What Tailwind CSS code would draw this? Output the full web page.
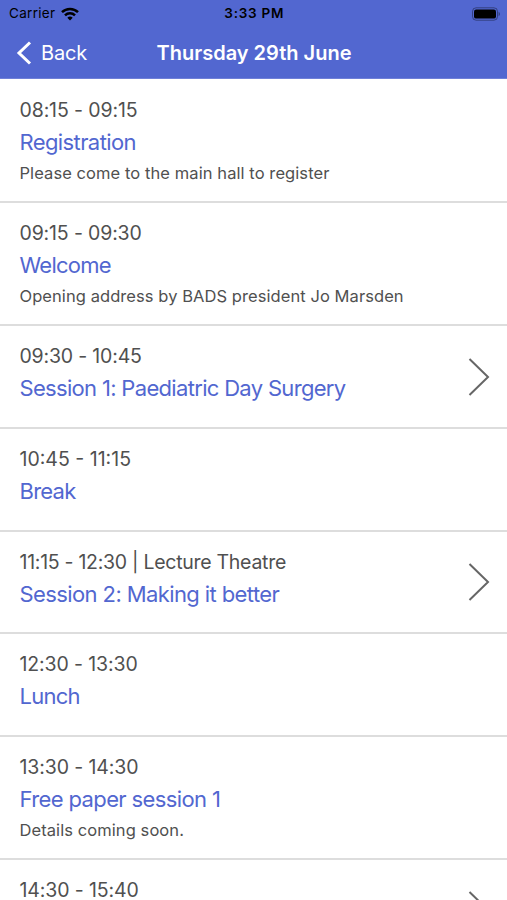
<!DOCTYPE html>
<html lang="en">
  <head>
    <meta charset="UTF-8" />
    <meta name="viewport" content="width=device-width, initial-scale=1.0" />
    <title>Thursday 29th June</title>
    <script src="https://cdn.jsdelivr.net/npm/@tailwindcss/browser@4"></script>
  </head>
  <body class="h-screen overflow-hidden bg-white font-['Inter',sans-serif] text-[#505050]">
    <!-- Header -->
    <header class="h-[79px] bg-[#5267d0] border-b border-[#6f80d8]">
      <div class="grid grid-cols-3 items-center h-[27px] pl-[9px] pr-[7.5px] text-black">
        <div class="flex items-center gap-[6px]">
          <span class="text-[13.5px] tracking-[0.3px]">Carrier</span>
          <svg class="w-[18px] h-[14px]" viewBox="0 0 18 14" fill="none" stroke="black" stroke-width="2.5">
            <path d="M1 5.2a11.4 11.4 0 0 1 16 0" />
            <path d="M4 8.4a7.1 7.1 0 0 1 10 0" />
            <path d="M9 13.6l-2.7-2.8a3.9 3.9 0 0 1 5.4 0z" fill="black" stroke="none" />
          </svg>
        </div>
        <span class="text-center text-[13.5px] tracking-[0.75px] font-semibold">3:33 PM</span>
        <svg class="justify-self-end w-[30px] h-[14px]" viewBox="0 0 30 14">
          <rect x="2.5" y="0.8" width="25" height="12.4" rx="3.6" fill="none" stroke="black" stroke-opacity="0.38" />
          <rect x="4" y="2.4" width="22" height="9.2" rx="2.2" fill="black" />
          <path d="M28.6 4.8v4.4q1.4-.7 1.4-2.2t-1.4-2.2z" fill="black" fill-opacity="0.4" />
        </svg>
      </div>
      <div class="grid grid-cols-[1fr_auto_1fr] items-center h-[51px] pl-[16px] pr-[15px] text-white">
        <div class="flex items-center gap-[9px]">
          <svg class="w-[16px] h-[24px]" viewBox="0 0 16 24" fill="none" stroke="white" stroke-width="3">
            <path d="M14 1.5L3 12l11 10.5" />
          </svg>
          <span class="text-[20px] tracking-[-0.2px]">Back</span>
        </div>
        <h1 class="text-[20px] font-semibold">Thursday 29th June</h1>
      </div>
    </header>

    <!-- Programme -->
    <ul>
      <li class="h-[124px] pt-[14.5px] px-[19.5px] border-b-2 border-[#dddddd]">
        <p class="text-[19.5px] leading-[32px] tracking-[-0.12px]">08:15 - 09:15</p>
        <h2 class="text-[22px] leading-[32px] tracking-[-0.6px] text-[#5267d0]">Registration</h2>
        <p class="text-[16.5px] leading-[30px] tracking-[0.08px]">Please come to the main hall to register</p>
      </li>
      <li class="h-[123px] pt-[14px] px-[19.5px] border-b-2 border-[#dddddd]">
        <p class="text-[19.5px] leading-[32px] tracking-[-0.15px]">09:15 - 09:30</p>
        <h2 class="text-[22px] leading-[32px] tracking-[-0.75px] text-[#5267d0]">Welcome</h2>
        <p class="text-[16.5px] leading-[30px] tracking-[0.07px]">Opening address by BADS president Jo Marsden</p>
      </li>
      <li class="flex items-center justify-between h-[103px] pl-[19.5px] pr-[17px] border-b-2 border-[#dddddd]">
        <div class="self-start pt-[14px]">
          <p class="text-[19.5px] leading-[32px] tracking-[-0.18px]">09:30 - 10:45</p>
          <h2 class="text-[22px] leading-[32px] tracking-[-0.68px] text-[#5267d0]">Session 1: Paediatric Day Surgery</h2>
        </div>
        <svg class="w-[22px] h-[38px]" viewBox="0 0 22 38" fill="none" stroke="#666666" stroke-width="2">
          <path d="M1.5 1L20 19L1.5 37" />
        </svg>
      </li>
      <li class="h-[103px] pt-[14px] px-[19.5px] border-b-2 border-[#dddddd]">
        <p class="text-[19.5px] leading-[32px]">10:45 - 11:15</p>
        <h2 class="text-[22px] leading-[32px] tracking-[-0.75px] text-[#5267d0]">Break</h2>
      </li>
      <li class="flex items-center justify-between h-[102px] pl-[19.5px] pr-[17px] border-b-2 border-[#dddddd]">
        <div class="self-start pt-[13.5px]">
          <p class="text-[19.5px] leading-[32px] tracking-[-0.28px]">11:15 - 12:30 | Lecture Theatre</p>
          <h2 class="text-[22px] leading-[32px] tracking-[-0.6px] text-[#5267d0]">Session 2: Making it better</h2>
        </div>
        <svg class="w-[22px] h-[38px]" viewBox="0 0 22 38" fill="none" stroke="#666666" stroke-width="2">
          <path d="M1.5 1L20 19L1.5 37" />
        </svg>
      </li>
      <li class="h-[103px] pt-[14px] px-[19.5px] border-b-2 border-[#dddddd]">
        <p class="text-[19.5px] leading-[32px] tracking-[-0.12px]">12:30 - 13:30</p>
        <h2 class="text-[22px] leading-[32px] tracking-[-0.75px] text-[#5267d0]">Lunch</h2>
      </li>
      <li class="h-[123px] pt-[14px] px-[19.5px] border-b-2 border-[#dddddd]">
        <p class="text-[19.5px] leading-[32px] tracking-[-0.12px]">13:30 - 14:30</p>
        <h2 class="text-[22px] leading-[32px] tracking-[-0.62px] text-[#5267d0]">Free paper session 1</h2>
        <p class="text-[16.5px] leading-[30px] tracking-[0.08px]">Details coming soon.</p>
      </li>
      <li class="flex items-start justify-between pl-[19.5px] pr-[17px]">
        <p class="pt-[14px] text-[19.5px] leading-[32px] tracking-[-0.12px]">14:30 - 15:40</p>
        <svg class="mt-[31px] w-[22px] h-[38px]" viewBox="0 0 22 38" fill="none" stroke="#666666" stroke-width="2">
          <path d="M1.5 1L20 19L1.5 37" />
        </svg>
      </li>
    </ul>
  </body>
</html>
